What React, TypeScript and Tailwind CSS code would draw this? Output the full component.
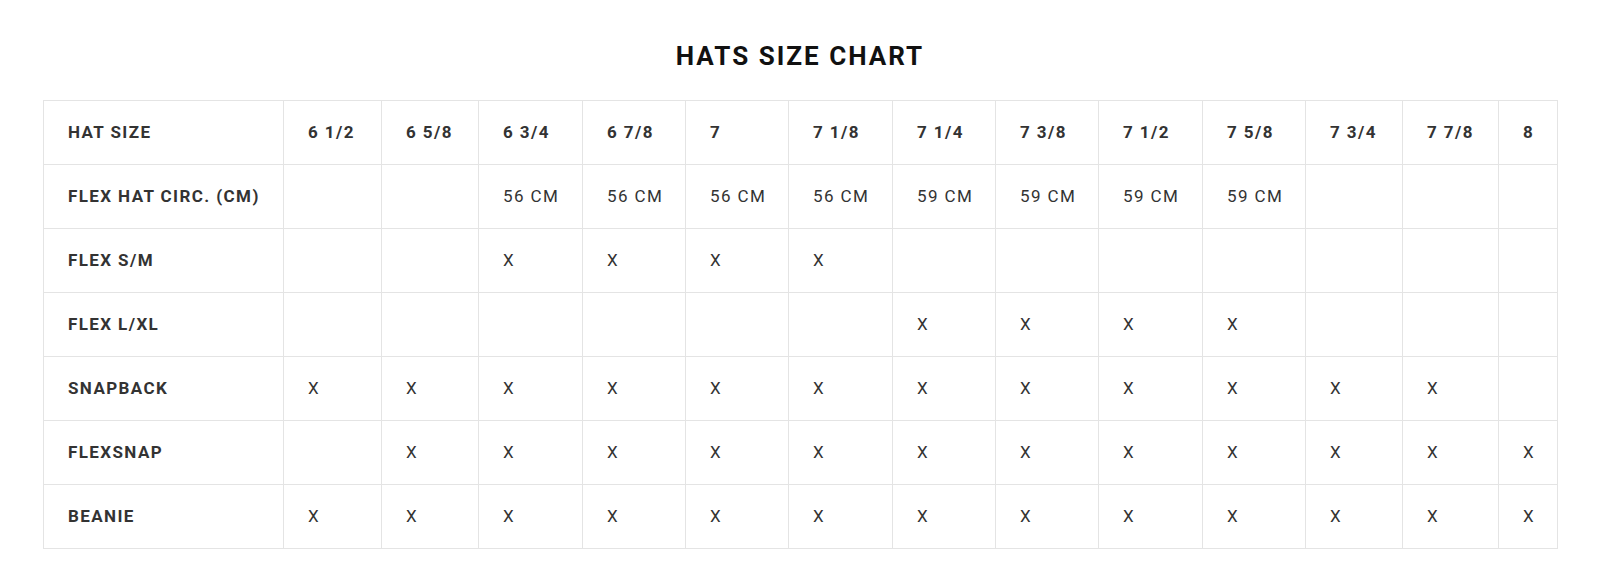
const sizes = ['6 1/2', '6 5/8', '6 3/4', '6 7/8', '7', '7 1/8', '7 1/4', '7 3/8', '7 1/2', '7 5/8', '7 3/4', '7 7/8', '8'];

const colWidths = [
  'w-[240px]', 'w-[98px]', 'w-[97px]', 'w-[104px]', 'w-[103px]', 'w-[103px]', 'w-[104px]',
  'w-[103px]', 'w-[103px]', 'w-[104px]', 'w-[103px]', 'w-[97px]', 'w-[96px]', 'w-[59px]',
];

const X = 'X';

const rows: { label: string; cells: string[] }[] = [
  { label: 'FLEX HAT CIRC. (CM)', cells: ['', '', '56 CM', '56 CM', '56 CM', '56 CM', '59 CM', '59 CM', '59 CM', '59 CM', '', '', ''] },
  { label: 'FLEX S/M', cells: ['', '', X, X, X, X, '', '', '', '', '', '', ''] },
  { label: 'FLEX L/XL', cells: ['', '', '', '', '', '', X, X, X, X, '', '', ''] },
  { label: 'SNAPBACK', cells: [X, X, X, X, X, X, X, X, X, X, X, X, ''] },
  { label: 'FLEXSNAP', cells: ['', X, X, X, X, X, X, X, X, X, X, X, X] },
  { label: 'BEANIE', cells: [X, X, X, X, X, X, X, X, X, X, X, X, X] },
];

export default function App() {
  return (
    <main className="min-h-[580px] bg-white font-['Roboto','Liberation_Sans',sans-serif] text-[#333]">
      <h1 className="pt-[40px] text-center text-[26px] leading-[32px] font-bold tracking-[2px] text-[#111] pl-[3px]">
        HATS SIZE CHART
      </h1>
      <div className="mt-[28px] pl-[43px]">
        <table className="table-fixed border-collapse w-[1515px] text-[17px] tracking-[1.4px]">
          <colgroup>
            {colWidths.map((w, i) => (
              <col key={i} className={w} />
            ))}
          </colgroup>
          <thead>
            <tr className="h-16">
              <th className="border border-[#e4e4e4] pl-6 text-left font-bold whitespace-nowrap">HAT SIZE</th>
              {sizes.map((s) => (
                <th key={s} className="border border-[#e4e4e4] pl-6 text-left font-bold whitespace-nowrap">
                  {s}
                </th>
              ))}
            </tr>
          </thead>
          <tbody>
            {rows.map((row) => (
              <tr key={row.label} className="h-16">
                <td className="border border-[#e4e4e4] pl-6 font-bold whitespace-nowrap">{row.label}</td>
                {row.cells.map((c, i) => (
                  <td key={i} className="border border-[#e4e4e4] pl-6 whitespace-nowrap">
                    {c}
                  </td>
                ))}
              </tr>
            ))}
          </tbody>
        </table>
      </div>
    </main>
  );
}
